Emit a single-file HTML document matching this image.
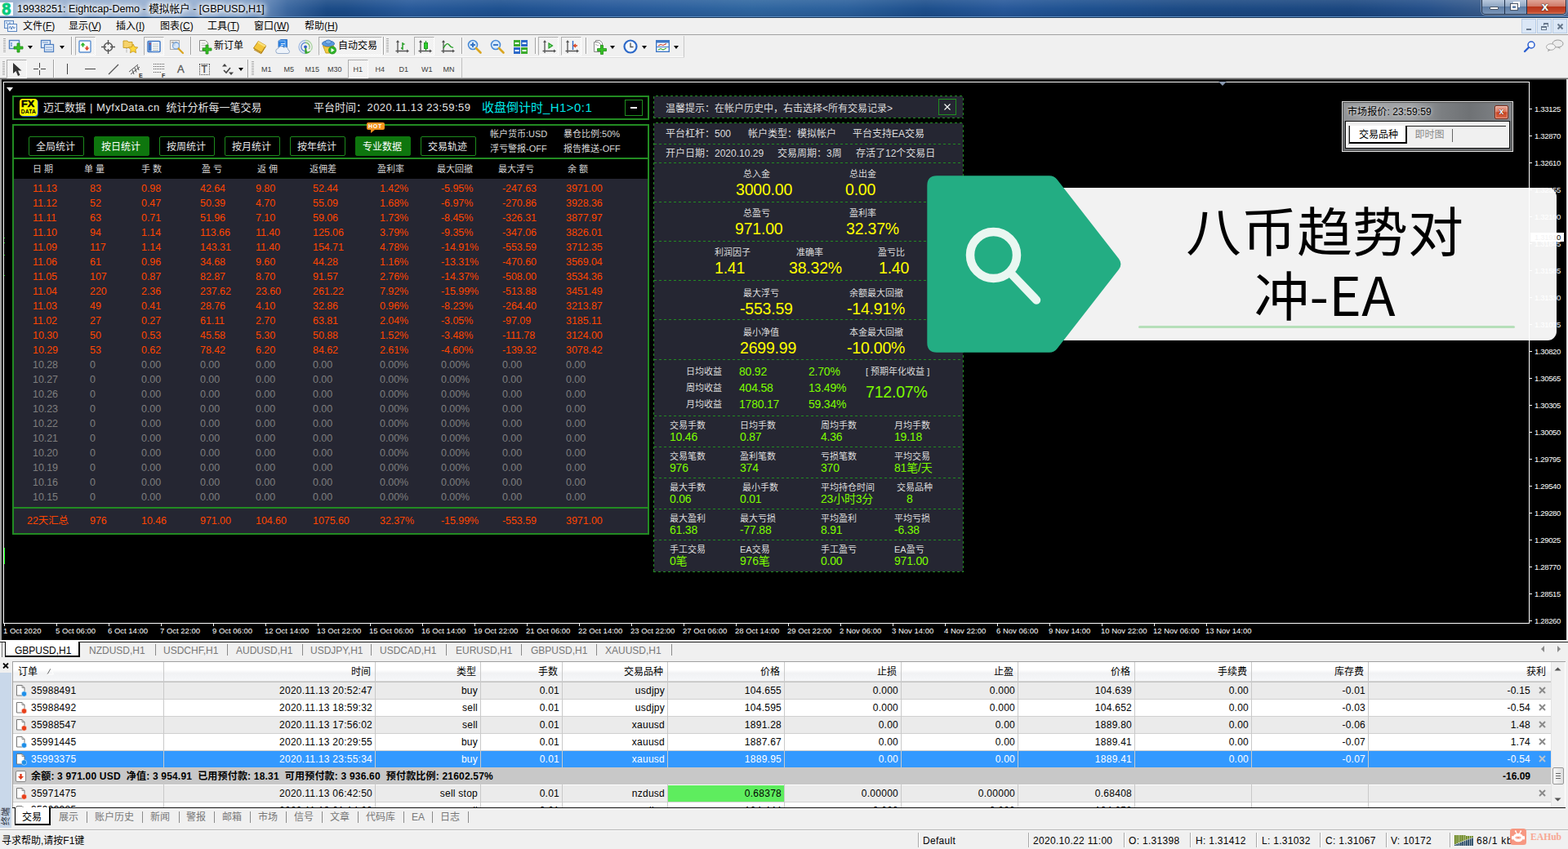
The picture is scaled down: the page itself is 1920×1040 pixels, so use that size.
<!DOCTYPE html>
<html lang="zh-CN">
<head>
<meta charset="utf-8">
<title>19938251: Eightcap-Demo - 模拟帐户 - [GBPUSD,H1]</title>
<style>
*{box-sizing:border-box;margin:0;padding:0}
html,body{width:1920px;height:1040px;overflow:hidden;background:#f0f0f0}
body{position:relative;font-family:"Liberation Sans","Noto Sans CJK SC",sans-serif;font-size:12px;color:#000}
div,span,svg,i,b,u{position:absolute;white-space:nowrap;font-style:normal}
u{position:static}
.s{position:static}

#title{left:0;top:0;width:1920px;height:22px;background:linear-gradient(90deg,#1c4c88 0,#1b4b87 22%,#27599a 26%,#1e5190 32%,#27599a 38%,#2f66a0 48%,#2b609c 54%,#1d4f8c 59%,#27589a 64%,#1e5190 69%,#1c4a84 76%,#1b4780 86%,#25508a 91%,#3a5d8c 95%,#4e6d98 98%,#58759e 100%)}
#tglow{left:0;top:0;width:400px;height:20px;background:linear-gradient(90deg,rgba(166,186,214,.95) 0,rgba(164,186,216,.93) 60%,rgba(156,182,218,.8) 76%,rgba(120,156,205,.35) 88%,rgba(80,130,190,0) 100%)}
#title:after{content:"";position:absolute;left:0;right:0;bottom:0;height:2px;background:linear-gradient(180deg,#5f8fc4 0,#5f8fc4 50%,#15304f 50%,#15304f 100%)}
#title:before{content:"";position:absolute;left:0;right:0;top:0;height:20px;background:linear-gradient(180deg,rgba(255,255,255,.10),rgba(255,255,255,0) 55%,rgba(0,0,20,.10))}
.ttxt{left:21px;top:3px;font-size:12.620px;line-height:16px;color:#000;text-shadow:0 0 7px #fff,0 0 7px #fff,0 0 4px #fff,0 0 10px #fff}
.wb{top:0;height:18px;border:1px solid #1c2c44;border-top:none}
.mn{top:25px;font-size:12px;line-height:14px;color:#000}
.mdib{top:23px;width:18px;height:18px;background:#dbe7f6;border:1px solid #b8cde6}
.grip{width:3px;background:repeating-linear-gradient(180deg,#a8a8a8 0,#a8a8a8 1px,#f8f8f8 1px,#f8f8f8 2px)}
.sep{width:2px;border-left:1px solid #a0a0a0;border-right:1px solid #fff}
.pressed{background:repeating-conic-gradient(#fff 0 25%,#e6e6e6 0 50%) 0 0/2px 2px;border:1px solid #b0b0b0;border-right-color:#fff;border-bottom-color:#fff}
.tf{top:78.500px;font-size:9px;line-height:12px;color:#3c3c3c}
.dd{width:0;height:0;border-left:3.5px solid transparent;border-right:3.5px solid transparent;border-top:4px solid #000}

.pl{left:1879px;font-size:9.500px;line-height:11px;color:#fff;font-family:"Liberation Sans",sans-serif;letter-spacing:-.33px}
.tk{left:1873px;width:3px;height:1px;background:#fff}
.tl{top:767px;font-size:9.500px;line-height:11px;color:#fff;font-family:"Liberation Sans",sans-serif}
.tt{top:763px;width:1px;height:4px;background:#fff}
.ctab{top:790px;font-size:12px;line-height:14px;color:#777}
.csep{top:789px;width:1px;height:14px;background:#8a8a8a}

.lb{border:2px solid #228b22}
.btn{top:167px;width:68px;height:24px;border:1px solid #1d8a1d;border-radius:2px;text-align:center;font-size:12px;line-height:23px;color:#e6e6e6;padding:1px 2px 0 0}
.btn.on{background:#0e760e;border-color:#0e760e;color:#fff}
.hd{top:200px;font-size:11px;line-height:14px;color:#d4d4d4}
.r{font-size:12.500px;line-height:18px;color:#ff4500;font-family:"Liberation Sans","Noto Sans CJK SC",sans-serif;letter-spacing:-.07px}
.r.z{color:#7e7e7e}
.inf{font-size:11px;line-height:14px;color:#d8d8d8}

.rp{background:#252632}
.ds{left:801px;width:378px;height:1px;background:repeating-linear-gradient(90deg,#228b22 0,#228b22 3px,transparent 3px,transparent 6px)}
.rt{font-size:12px;line-height:14px;color:#dcdcdc}
.rl{font-size:11px;line-height:14px;color:#dcdcdc}
.yv{font-size:19.500px;line-height:22px;color:#ffff00;font-family:"Liberation Sans",sans-serif;letter-spacing:-.2px}
.gv{font-size:14px;line-height:16px;color:#7cfc00;font-family:"Liberation Sans","Noto Sans CJK SC",sans-serif;letter-spacing:-.2px}

.bt{left:1372px;width:500px;text-align:center;font-size:68px;line-height:79px;color:#000;font-family:"Noto Sans CJK SC","Liberation Sans",sans-serif;font-weight:400;transform:scaleY(.96);transform-origin:50% 50%}

.th{top:816px;font-size:12px;line-height:14px;color:#000}
.td{font-size:12px;line-height:20px;color:#000;letter-spacing:.25px;font-family:"Liberation Sans","Noto Sans CJK SC",sans-serif}
.vs{top:811px;width:1px;background:#c9c9c9}
.hl{left:16px;width:1883px;height:1px;background:#d0d0d0}
.bt2{top:994px;font-size:12px;line-height:14px;color:#777}
.bsep{top:994px;width:1px;height:14px;background:#8a8a8a}
.sb{top:1023px;font-size:12px;line-height:14px;color:#000;letter-spacing:.3px}
.ssep{top:1020px;width:2px;height:18px;border-left:1px solid #a8a8a8;border-right:1px solid #fff}
</style>
</head>
<body>

<!-- top -->
<div id="title"></div><div id="tglow"></div>
<div style="left:0px;top:3px;width:16px;height:16px;background:#fff;overflow:hidden"><span style="left:2.300px;top:-3.500px;font-size:20px;line-height:22px;font-weight:bold;color:#05c97c;-webkit-text-stroke:.800px #05c97c;font-family:'Liberation Sans',sans-serif">8</span></div>
<span class="ttxt">19938251: Eightcap-Demo - 模拟帐户 - [GBPUSD,H1]</span>
<div style="left:1814px;top:0px;width:104px;height:18px;border:1px solid #20324c;border-top:none;border-radius:0 0 5px 5px;overflow:hidden;box-shadow:0 0 0 1px rgba(255,255,255,.35)"><div style="left:0px;top:0px;width:28px;height:17px;background:linear-gradient(180deg,#b9c9dd 0,#8fa6c3 45%,#5f7ea6 50%,#7c97b9 100%);border-right:1px solid #20324c"></div><div style="left:28px;top:0px;width:27px;height:17px;background:linear-gradient(180deg,#b9c9dd 0,#8fa6c3 45%,#5f7ea6 50%,#7c97b9 100%);border-right:1px solid #20324c"></div><div style="left:55px;top:0px;width:48px;height:17px;background:linear-gradient(180deg,#e0a597 0,#d07a68 45%,#b9351a 50%,#c44a2e 85%,#d8785a 100%)"></div><div style="left:9px;top:8px;width:11px;height:4px;background:#fff;border:1px solid #4a5566;border-radius:1px"></div><div style="left:35px;top:5px;width:8px;height:7px;border:2px solid #fff;outline:1px solid #4a5566"></div><div style="left:38px;top:2px;width:8px;height:7px;border:2px solid #fff;border-left:none;border-bottom:none"></div><span style="left:72.500px;top:-2.500px;font-size:15.500px;line-height:20px;font-weight:bold;color:#fff;text-shadow:0 0 2px #333,0 0 1px #333;font-family:'Liberation Sans',sans-serif">x</span></div>
<div style="left:0px;top:22px;width:1920px;height:20px;background:#f0f0f0"></div>
<div style="left:0px;top:42px;width:1920px;height:1px;background:#a0a0a0"></div>
<svg style="left:4px;top:24px" width="18" height="16" viewBox="0 0 18 16"><rect x="1.5" y="1.5" width="11" height="9" fill="#dce9f8" stroke="#5b86c0"/><rect x="5.5" y="5.5" width="11" height="9" fill="#eef4fc" stroke="#5b86c0"/><path d="M7 11l1.5-3 1.5 4 1.5-4 1.5 3 1.5-2" fill="none" stroke="#5b86c0" stroke-width="1"/><path d="M3 4h2M7 4h2" stroke="#5b86c0"/></svg>
<span class="mn" style="left:28px">文件(<u>F</u>)</span>
<span class="mn" style="left:84px">显示(<u>V</u>)</span>
<span class="mn" style="left:142px">插入(<u>I</u>)</span>
<span class="mn" style="left:196px">图表(<u>C</u>)</span>
<span class="mn" style="left:254px">工具(<u>T</u>)</span>
<span class="mn" style="left:311px">窗口(<u>W</u>)</span>
<span class="mn" style="left:373px">帮助(<u>H</u>)</span>
<div class="mdib" style="left:1863px"><i style="left:5px;top:11px;width:6px;height:2px;background:#68788c"></i></div>
<div class="mdib" style="left:1882px"><i style="left:4px;top:8px;width:7px;height:5px;border:1px solid #68788c;border-top-width:2px"></i><i style="left:7px;top:4px;width:6px;height:5px;border:1px solid #68788c;border-top-width:2px;border-left:none;border-bottom:none"></i><i style="left:7px;top:4px;width:1px;height:3px;background:#68788c"></i></div>
<div class="mdib" style="left:1901px"><svg style="left:4px;top:4px" width="10" height="10" viewBox="0 0 10 10"><path d="M1.5 1.5l6 6M7.5 1.5l-6 6" stroke="#68788c" stroke-width="2"/></svg></div>
<div style="left:0px;top:43px;width:1920px;height:54px;background:#f0f0f0"></div>
<div style="left:0px;top:69px;width:838px;height:1px;background:#fdfdfd"></div>
<div style="left:0px;top:70px;width:838px;height:1px;background:#dcdcdc"></div>
<div style="left:837px;top:44px;width:1px;height:26px;background:#c8c8c8"></div>
<div style="left:565px;top:71px;width:1px;height:25px;background:#c0c0c0"></div>
<div style="left:0px;top:95px;width:1920px;height:1px;background:#b4b4b4"></div>
<div style="left:0px;top:96px;width:1920px;height:1px;background:#6c6c6c"></div>
<i class="grip" style="left:4px;top:47px;height:18px"></i>
<i class="grip" style="left:473px;top:47px;height:18px"></i>
<i class="grip" style="left:3px;top:75px;height:18px"></i>
<i class="grip" style="left:308px;top:75px;height:18px"></i>
<i class="sep" style="left:87px;top:45px;height:22px"></i>
<i class="sep" style="left:233px;top:45px;height:22px"></i>
<i class="sep" style="left:469px;top:45px;height:22px"></i>
<i class="sep" style="left:565px;top:46px;height:20px"></i>
<i class="sep" style="left:655px;top:46px;height:20px"></i>
<i class="sep" style="left:717px;top:46px;height:20px"></i>
<i class="sep" style="left:65px;top:73px;height:22px"></i>
<i class="sep" style="left:303px;top:73px;height:22px"></i>
<i class="pressed" style="left:92px;top:45px;width:25px;height:23px"></i>
<i class="pressed" style="left:176px;top:45px;width:25px;height:23px"></i>
<i class="pressed" style="left:390px;top:45px;width:78px;height:23px"></i>
<i class="pressed" style="left:507px;top:45px;width:25px;height:23px"></i>
<i class="pressed" style="left:659px;top:45px;width:25px;height:23px"></i>
<i class="pressed" style="left:687px;top:45px;width:25px;height:23px"></i>
<i class="pressed" style="left:8px;top:73px;width:25px;height:23px"></i>
<i class="pressed" style="left:426px;top:73px;width:25px;height:23px"></i>
<svg style="left:10px;top:48px" width="20" height="18" viewBox="0 0 20 18"><rect x="1.5" y="1.5" width="12" height="10" fill="#e8f1fb" stroke="#4f7fc0" stroke-width="1.4"/><path d="M4 4v5M3 5h2M3 8h2" stroke="#4f7fc0" stroke-width=".8"/><path d="M7 9h4v-4h3v4h4v3h-4v4h-3v-4h-4z" fill="#35c025" stroke="#1d8a12" stroke-width=".8"/></svg>
<i class="dd" style="left:34px;top:56px"></i>
<svg style="left:49px;top:48px" width="20" height="18" viewBox="0 0 20 18"><rect x="1.5" y="1.5" width="11" height="9" fill="#e8f1fb" stroke="#4f7fc0" stroke-width="1.3"/><rect x="5.5" y="6.5" width="11" height="9" fill="#e8f1fb" stroke="#4f7fc0" stroke-width="1.3"/><path d="M7 10h8M7 13h8M3 4h7" stroke="#4f7fc0" stroke-width=".8"/></svg>
<i class="dd" style="left:73px;top:56px"></i>
<svg style="left:96px;top:49px" width="17" height="17" viewBox="0 0 17 17"><rect x="1" y="1" width="14" height="14" rx="1" fill="#fff" stroke="#5b8fd0" stroke-width="1.4"/><path d="M5.5 3l3 3.5h-2v2h-2v-2h-2z" fill="#2fb52a"/><path d="M10.500 13l-3-3.500h2v-2h2v2h2z" fill="#e0482a"/></svg>
<svg style="left:124px;top:49px" width="17" height="17" viewBox="0 0 17 17"><circle cx="8.500" cy="8.500" r="5" fill="none" stroke="#555" stroke-width="1.4"/><path d="M8.500 0v6M8.500 11v6M0 8.500h6M11 8.500h6" stroke="#555" stroke-width="1.4"/></svg>
<svg style="left:150px;top:47px" width="20" height="20" viewBox="0 0 20 20"><path d="M1 5v-2h5l1 1.500h5v7h-11z" fill="#f6d36b" stroke="#c79a1e" stroke-width=".9"/><path d="M13 7l1.800 3.600 3.900.5-2.900 2.700.8 3.900-3.600-1.900-3.500 1.900.7-3.900-2.800-2.700 3.900-.5z" fill="#ffd83b" stroke="#c79a1e" stroke-width=".9"/><path d="M5 12v5" stroke="#888" stroke-width="1" stroke-dasharray="1 1"/></svg>
<svg style="left:180px;top:49px" width="17" height="17" viewBox="0 0 17 17"><rect x="1" y="1.500" width="15" height="13" rx="1" fill="#fff" stroke="#3f78c6" stroke-width="1.500"/><rect x="2" y="2.500" width="3.500" height="11" fill="#3f78c6"/><path d="M7 5h7M7 7.500h7M7 10h7M7 12.500h7" stroke="#9aa" stroke-width=".8"/><rect x="3" y="4" width="1.500" height="1.500" fill="#f33"/></svg>
<svg style="left:207px;top:48px" width="20" height="20" viewBox="0 0 20 20"><rect x="1.500" y="1.500" width="11" height="11" fill="#eee" stroke="#aaa"/><path d="M3 4h3v4M10 4h-3v4" stroke="#777" fill="none"/><circle cx="8.500" cy="8" r="4" fill="#cfe4fa" fill-opacity=".8" stroke="#7aa7dc" stroke-width="1.300"/><path d="M11.500 11.500l5.500 5.500" stroke="#d9a520" stroke-width="2.200" stroke-linecap="round"/></svg>
<svg style="left:242px;top:48px" width="20" height="20" viewBox="0 0 20 20"><path d="M2.500 1.500h7l3 3v10h-10z" fill="#fff" stroke="#888"/><path d="M4.500 5h5M4.500 7.500h6M4.500 10h6" stroke="#aaa" stroke-width=".9"/><path d="M6 11h4v-4h3v4h4v3h-4v4h-3v-4h-4z" fill="#35c025" stroke="#1d8a12" stroke-width=".8"/></svg>
<span style="left:262px;top:49px;font-size:12px;line-height:14px">新订单</span>
<svg style="left:308px;top:48px" width="20" height="20" viewBox="0 0 20 20"><path d="M2.500 11l5.800-8.500 9.200 5.300-5.500 8.700z" fill="#f3c63a" stroke="#b5820f" stroke-width=".9"/><path d="M8.300 2.500l9.200 5.300-1.200 1.900-9-5.200z" fill="#fbe27a"/><path d="M2.500 11l9.500 5.500M3 12.800l8.800 5 5.700-9" fill="none" stroke="#b5820f" stroke-width="1"/></svg>
<svg style="left:336px;top:47px" width="20" height="20" viewBox="0 0 20 20"><path d="M5 3l3-1.500h7.500v10h-10.500z" fill="#2f86e6" stroke="#1f63b8" stroke-width=".8"/><path d="M5 3h8v9" fill="none" stroke="#9cc8f5" stroke-width=".8"/><path d="M8 6.500h5M8 8.500h3" stroke="#d7e8fb" stroke-width="1.100"/><path d="M5 18.500a3 3 0 01-.5-6 4 4 0 017-1.200 3.300 3.300 0 015.300 2.700 2.300 2.300 0 01-.8 4.500z" fill="#eef3fa" stroke="#8ea6c6" stroke-width=".9"/></svg>
<svg style="left:364px;top:48px" width="20" height="20" viewBox="0 0 20 20"><path d="M10 1.500a8 8 0 000 16" fill="none" stroke="#9db8e2" stroke-width="1.300"/><path d="M10 4.300a5.200 5.200 0 000 10.400" fill="none" stroke="#5f8bd6" stroke-width="1.400"/><path d="M10 1.500a8 8 0 017 12" fill="none" stroke="#a9d3a0" stroke-width="1.300"/><path d="M10 4.300a5.200 5.200 0 014.500 7.800" fill="none" stroke="#7cc06e" stroke-width="1.400"/><path d="M10.300 9.500v8.500a8 8 0 006.700-4.500a9 9 0 01-5 2z" fill="#3fae35"/><path d="M10.300 9.500v8" stroke="#2f9a28" stroke-width="1.800"/><circle cx="10" cy="9.300" r="1.900" fill="#2f62c8"/></svg>
<svg style="left:393px;top:47px" width="22" height="22" viewBox="0 0 22 22"><ellipse cx="9" cy="6.500" rx="7.500" ry="3.500" fill="#5a9be0" stroke="#3a70b8"/><ellipse cx="9" cy="4.500" rx="3.500" ry="2.500" fill="#7fb4ea" stroke="#3a70b8" stroke-width=".8"/><path d="M2.500 9l3.500 9h6l3.500-9a14 14 0 01-13 0z" fill="#f3cc45" stroke="#c49a1a" stroke-width=".9"/><circle cx="14" cy="14.500" r="4.500" fill="#2fb52a" stroke="#1d8a12" stroke-width=".8"/><path d="M12.500 12l4 2.500-4 2.500z" fill="#fff"/></svg>
<span style="left:414px;top:49px;font-size:12px;line-height:14px">自动交易</span>
<svg style="left:483px;top:49px" width="18" height="18" viewBox="0 0 18 18"><path d="M4 1v15M1.500 13.500h15" stroke="#555" stroke-width="1.300" fill="none"/><path d="M4 0l-2 3h4zM18 13.500l-3-2v4z" fill="#555"/><path d="M10 3v9M8 10h2M10 5h2.500" stroke="#1f9a1f" stroke-width="1.400" fill="none"/></svg>
<svg style="left:511px;top:49px" width="18" height="18" viewBox="0 0 18 18"><path d="M4 1v15M1.500 13.500h15" stroke="#555" stroke-width="1.300" fill="none"/><path d="M4 0l-2 3h4zM18 13.500l-3-2v4z" fill="#555"/><path d="M10.500 1v12" stroke="#1f9a1f" stroke-width="1.200"/><rect x="8.500" y="3.500" width="4" height="7" fill="#2fd02f" stroke="#1f9a1f"/></svg>
<svg style="left:539px;top:49px" width="18" height="18" viewBox="0 0 18 18"><path d="M4 1v15M1.500 13.500h15" stroke="#555" stroke-width="1.300" fill="none"/><path d="M4 0l-2 3h4zM18 13.500l-3-2v4z" fill="#555"/><path d="M4 10q4-8 7-4t5 3" stroke="#1f9a1f" stroke-width="1.300" fill="none"/></svg>
<svg style="left:572px;top:48px" width="20" height="20" viewBox="0 0 20 20"><circle cx="7" cy="7" r="5.500" fill="#d9ebfb" stroke="#4a8bd6" stroke-width="1.600"/><path d="M11 11l5.500 5.500" stroke="#d9a520" stroke-width="2.600" stroke-linecap="round"/><path d="M4 7h6" stroke="#2b6cc0" stroke-width="1.800"/><path d="M7 4v6" stroke="#2b6cc0" stroke-width="1.800"/></svg>
<svg style="left:600px;top:48px" width="20" height="20" viewBox="0 0 20 20"><circle cx="7" cy="7" r="5.500" fill="#d9ebfb" stroke="#4a8bd6" stroke-width="1.600"/><path d="M11 11l5.500 5.500" stroke="#d9a520" stroke-width="2.600" stroke-linecap="round"/><path d="M4 7h6" stroke="#2b6cc0" stroke-width="1.800"/></svg>
<svg style="left:629px;top:49px" width="17" height="17" viewBox="0 0 17 17"><rect x="0" y="0" width="8" height="8" fill="#3cab2e"/><rect x="9" y="0" width="8" height="8" fill="#2b68c8"/><rect x="0" y="9" width="8" height="8" fill="#2b68c8"/><rect x="9" y="9" width="8" height="8" fill="#3cab2e"/><path d="M1.500 4h5M10.500 4h5M1.500 13h5M10.500 13h5" stroke="#fff" stroke-width="2"/></svg>
<svg style="left:663px;top:49px" width="18" height="18" viewBox="0 0 18 18"><path d="M4 2v14M1.500 13.500h15" stroke="#555" stroke-width="1.300" fill="none"/><path d="M4 0l-2 3h4zM18 13.500l-3-2v4z" fill="#555"/><path d="M9 4l4.500 3-4.500 3z" fill="#7fe07f" stroke="#1f9a1f" stroke-width="1.200"/></svg>
<svg style="left:691px;top:49px" width="18" height="18" viewBox="0 0 18 18"><path d="M4 2v14M1.500 13.500h15" stroke="#555" stroke-width="1.300" fill="none"/><path d="M4 0l-2 3h4zM18 13.500l-3-2v4z" fill="#555"/><path d="M10.500 1v11" stroke="#2b68c8" stroke-width="1.400"/><path d="M16 7h-4M14 5l-2.500 2 2.500 2" stroke="#d8431f" stroke-width="1.300" fill="none"/></svg>
<svg style="left:725px;top:48px" width="20" height="20" viewBox="0 0 20 20"><path d="M4.500 1.500h5l3 3v9h-8z" fill="#fff" stroke="#888"/><path d="M2.500 3.500h5l3 3v9h-8z" fill="#fff" stroke="#888"/><path d="M4 7c2-2 2 3 4 0" stroke="#888" fill="none" stroke-width=".8"/><path d="M6.5 11.5h4v-4h3v4h4v3h-4v4h-3v-4h-4z" fill="#35c025" stroke="#1d8a12" stroke-width=".8"/></svg>
<i class="dd" style="left:747px;top:56px"></i>
<svg style="left:763px;top:48px" width="18" height="18" viewBox="0 0 18 18"><circle cx="9" cy="9" r="7.500" fill="#f4f8fd" stroke="#2b68c8" stroke-width="2.200"/><path d="M9 4.500v5h3.500" stroke="#555" stroke-width="1.300" fill="none"/></svg>
<i class="dd" style="left:786px;top:56px"></i>
<svg style="left:803px;top:49px" width="18" height="16" viewBox="0 0 18 16"><rect x=".7" y=".7" width="15.600" height="13.600" fill="#fff" stroke="#3f78c6" stroke-width="1.400"/><rect x="1" y="1" width="15" height="2.500" fill="#3f78c6"/><path d="M1 8.500h15" stroke="#3f78c6" stroke-width="1"/><path d="M3 7l3-1.500 3 1 4-2" stroke="#c0392b" stroke-width="1.100" fill="none"/><path d="M3 12l3-1.500 3 1.500 4-2" stroke="#2fa52a" stroke-width="1.100" fill="none"/></svg>
<i class="dd" style="left:825px;top:56px"></i>
<svg style="left:1864px;top:49px" width="18" height="18" viewBox="0 0 18 18"><circle cx="11" cy="6" r="4" fill="#fff" stroke="#2b5fd0" stroke-width="1.500"/><path d="M8 9l-5 5" stroke="#2b5fd0" stroke-width="2.400" stroke-linecap="round"/></svg>
<svg style="left:1892px;top:48px" width="24" height="18" viewBox="0 0 24 18"><ellipse cx="15.500" cy="5.500" rx="6.500" ry="4.500" fill="#ececec" stroke="#9a9a9a"/><path d="M17 9.500l2 3-4-3z" fill="#999"/><ellipse cx="7" cy="9.500" rx="5.500" ry="3.800" fill="#f4f4f4" stroke="#aaa"/><path d="M4 12.500l-1 3 3.500-2.500z" fill="#999"/></svg>
<svg style="left:13px;top:76px" width="16" height="18" viewBox="0 0 16 18"><path d="M3 1v13l3.500-3 2.500 6 2.500-1-2.500-5.500h4.500z" fill="#333"/></svg>
<svg style="left:40px;top:76px" width="18" height="18" viewBox="0 0 18 18"><path d="M8.500 1v6M8.500 10v6M1 8.500h6M10 8.500h6" stroke="#444" stroke-width="1"/></svg>
<div style="left:82px;top:78px;width:1px;height:13px;background:#444"></div>
<div style="left:104px;top:84px;width:13px;height:1px;background:#444"></div>
<svg style="left:131px;top:77px" width="16" height="16" viewBox="0 0 16 16"><path d="M2 14l12-12" stroke="#555" stroke-width="1.200"/></svg>
<svg style="left:157px;top:76px" width="20" height="20" viewBox="0 0 20 20"><path d="M1 12l11-9M3 15l11-9M5 9.500l2 5.500M8 7l2 5.500M11 4.500l2 5.500" stroke="#555" stroke-width="1" fill="none"/><text x="13" y="19" font-size="7" font-weight="bold" fill="#333" font-family="Liberation Sans,sans-serif">E</text></svg>
<svg style="left:187px;top:77px" width="20" height="20" viewBox="0 0 20 20"><path d="M1 1.500h13M1 4.500h13M1 7.500h13M1 11.500h10" stroke="#555" stroke-width="1" stroke-dasharray="1 1"/><text x="11" y="18" font-size="7" font-weight="bold" fill="#333" font-family="Liberation Sans,sans-serif">F</text></svg>
<span style="left:217px;top:77px;font-size:13px;line-height:15px;color:#555;font-weight:normal;-webkit-text-stroke:.3px #555;font-family:'Liberation Sans',sans-serif">A</span>
<div style="left:244px;top:78px;width:13px;height:14px;border:1px dotted #444"></div>
<span style="left:246.500px;top:78px;font-size:12px;line-height:14px;color:#444;font-weight:normal;-webkit-text-stroke:.3px #444;font-family:'Liberation Sans',sans-serif">T</span>
<svg style="left:270px;top:77px" width="18" height="16" viewBox="0 0 18 16"><path d="M5 1l3 3.500h-6z" fill="#444"/><path d="M13 15l-3-3.500h6z" fill="#444"/><path d="M4 9l3 3 5-6" stroke="#444" stroke-width="1.600" fill="none"/></svg>
<i class="dd" style="left:292px;top:83px"></i>
<span class="tf" style="left:320px">M1</span>
<span class="tf" style="left:347.5px">M5</span>
<span class="tf" style="left:373.5px">M15</span>
<span class="tf" style="left:401px">M30</span>
<span class="tf" style="left:432.5px">H1</span>
<span class="tf" style="left:459.5px">H4</span>
<span class="tf" style="left:488.5px">D1</span>
<span class="tf" style="left:516px">W1</span>
<span class="tf" style="left:542.5px">MN</span>
<!-- chart -->
<div style="left:0px;top:97px;width:1920px;height:687px;background:#000"></div>
<div style="left:0px;top:97px;width:1920px;height:1px;background:#3a3a3a"></div>
<div style="left:0px;top:97px;width:2px;height:687px;background:#a0a0a0"></div>
<div style="left:1918px;top:97px;width:2px;height:687px;background:#e8e8e8"></div>
<div style="left:4px;top:100px;width:1869px;height:1px;background:#fff"></div>
<div style="left:4px;top:100px;width:1px;height:664px;background:#fff"></div>
<div style="left:4px;top:763px;width:1869px;height:1px;background:#fff"></div>
<div style="left:1872px;top:100px;width:1px;height:664px;background:#fff"></div>
<div style="left:5px;top:671px;width:1px;height:20px;background:#00ff00"></div>
<div style="left:5px;top:291px;width:1px;height:1px;background:#00d000"></div>
<div style="left:5px;top:297px;width:1px;height:1px;background:#00d000"></div>
<div style="left:5px;top:312px;width:1px;height:1px;background:#00d000"></div>
<div style="left:5px;top:337px;width:1px;height:1px;background:#00d000"></div>
<i style="left:8px;top:107px;width:0;height:0;border-left:4px solid transparent;border-right:4px solid transparent;border-top:5px solid #fff"></i>
<i style="left:1492px;top:100px;width:0;height:0;border-left:5px solid transparent;border-right:5px solid transparent;border-top:5px solid #8a99b0"></i>
<i class="tk" style="top:133px"></i>
<span class="pl" style="top:127.5px">1.33125</span>
<i class="tk" style="top:166px"></i>
<span class="pl" style="top:160.5px">1.32870</span>
<i class="tk" style="top:199px"></i>
<span class="pl" style="top:193.5px">1.32610</span>
<i class="tk" style="top:232px"></i>
<span class="pl" style="top:226.5px">1.32355</span>
<i class="tk" style="top:265px"></i>
<span class="pl" style="top:259.5px">1.32100</span>
<i class="tk" style="top:298px"></i>
<span class="pl" style="top:292.5px">1.31845</span>
<i class="tk" style="top:331px"></i>
<span class="pl" style="top:325.5px">1.31585</span>
<i class="tk" style="top:364px"></i>
<span class="pl" style="top:358.5px">1.31330</span>
<i class="tk" style="top:397px"></i>
<span class="pl" style="top:391.5px">1.31075</span>
<i class="tk" style="top:430px"></i>
<span class="pl" style="top:424.5px">1.30820</span>
<i class="tk" style="top:463px"></i>
<span class="pl" style="top:457.5px">1.30565</span>
<i class="tk" style="top:496px"></i>
<span class="pl" style="top:490.5px">1.30305</span>
<i class="tk" style="top:529px"></i>
<span class="pl" style="top:523.5px">1.30050</span>
<i class="tk" style="top:562px"></i>
<span class="pl" style="top:556.5px">1.29795</span>
<i class="tk" style="top:595px"></i>
<span class="pl" style="top:589.5px">1.29540</span>
<i class="tk" style="top:628px"></i>
<span class="pl" style="top:622.5px">1.29280</span>
<i class="tk" style="top:661px"></i>
<span class="pl" style="top:655.5px">1.29025</span>
<i class="tk" style="top:694px"></i>
<span class="pl" style="top:688.5px">1.28770</span>
<i class="tk" style="top:727px"></i>
<span class="pl" style="top:721.5px">1.28515</span>
<i class="tk" style="top:760px"></i>
<span class="pl" style="top:754.5px">1.28260</span>
<div style="left:1874px;top:285px;width:41px;height:11px;background:#fff"></div>
<span class="pl" style="top:285px;color:#000">1.31910</span>
<i class="tt" style="left:5px"></i>
<span class="tl" style="left:4px">1 Oct 2020</span>
<i class="tt" style="left:69px"></i>
<span class="tl" style="left:68px">5 Oct 06:00</span>
<i class="tt" style="left:133px"></i>
<span class="tl" style="left:132px">6 Oct 14:00</span>
<i class="tt" style="left:197px"></i>
<span class="tl" style="left:196px">7 Oct 22:00</span>
<i class="tt" style="left:261px"></i>
<span class="tl" style="left:260px">9 Oct 06:00</span>
<i class="tt" style="left:325px"></i>
<span class="tl" style="left:324px">12 Oct 14:00</span>
<i class="tt" style="left:389px"></i>
<span class="tl" style="left:388px">13 Oct 22:00</span>
<i class="tt" style="left:453px"></i>
<span class="tl" style="left:452px">15 Oct 06:00</span>
<i class="tt" style="left:517px"></i>
<span class="tl" style="left:516px">16 Oct 14:00</span>
<i class="tt" style="left:581px"></i>
<span class="tl" style="left:580px">19 Oct 22:00</span>
<i class="tt" style="left:645px"></i>
<span class="tl" style="left:644px">21 Oct 06:00</span>
<i class="tt" style="left:709px"></i>
<span class="tl" style="left:708px">22 Oct 14:00</span>
<i class="tt" style="left:773px"></i>
<span class="tl" style="left:772px">23 Oct 22:00</span>
<i class="tt" style="left:837px"></i>
<span class="tl" style="left:836px">27 Oct 06:00</span>
<i class="tt" style="left:901px"></i>
<span class="tl" style="left:900px">28 Oct 14:00</span>
<i class="tt" style="left:965px"></i>
<span class="tl" style="left:964px">29 Oct 22:00</span>
<i class="tt" style="left:1029px"></i>
<span class="tl" style="left:1028px">2 Nov 06:00</span>
<i class="tt" style="left:1093px"></i>
<span class="tl" style="left:1092px">3 Nov 14:00</span>
<i class="tt" style="left:1157px"></i>
<span class="tl" style="left:1156px">4 Nov 22:00</span>
<i class="tt" style="left:1221px"></i>
<span class="tl" style="left:1220px">6 Nov 06:00</span>
<i class="tt" style="left:1285px"></i>
<span class="tl" style="left:1284px">9 Nov 14:00</span>
<i class="tt" style="left:1349px"></i>
<span class="tl" style="left:1348px">10 Nov 22:00</span>
<i class="tt" style="left:1413px"></i>
<span class="tl" style="left:1412px">12 Nov 06:00</span>
<i class="tt" style="left:1477px"></i>
<span class="tl" style="left:1476px">13 Nov 14:00</span>
<div style="left:0px;top:784px;width:1920px;height:2px;background:#fafafa"></div>
<div style="left:0px;top:786px;width:1920px;height:1px;background:#1a1a1a"></div>
<div style="left:0px;top:787px;width:1920px;height:23px;background:#f0f0f0"></div>
<div style="left:2px;top:787px;width:1px;height:18px;background:#777"></div>
<div style="left:6px;top:786px;width:92px;height:19px;background:#fff;border:1px solid #000;border-top:none;border-width:0 2px 2px 1px"></div>
<span class="ctab" style="left:18px;color:#000">GBPUSD,H1</span>
<span class="ctab" style="left:109px">NZDUSD,H1</span>
<span class="ctab" style="left:200px">USDCHF,H1</span>
<span class="ctab" style="left:289px">AUDUSD,H1</span>
<span class="ctab" style="left:380px">USDJPY,H1</span>
<span class="ctab" style="left:465px">USDCAD,H1</span>
<span class="ctab" style="left:558px">EURUSD,H1</span>
<span class="ctab" style="left:650px">GBPUSD,H1</span>
<span class="ctab" style="left:741px">XAUUSD,H1</span>
<i class="csep" style="left:190px"></i>
<i class="csep" style="left:278px"></i>
<i class="csep" style="left:370px"></i>
<i class="csep" style="left:454px"></i>
<i class="csep" style="left:546px"></i>
<i class="csep" style="left:638px"></i>
<i class="csep" style="left:730px"></i>
<i class="csep" style="left:822px"></i>
<i style="left:1887px;top:791px;width:0;height:0;border-top:4px solid transparent;border-bottom:4px solid transparent;border-right:4px solid #8a8a8a"></i>
<i style="left:1907px;top:791px;width:0;height:0;border-top:4px solid transparent;border-bottom:4px solid transparent;border-left:4px solid #8a8a8a"></i>
<div style="left:1643px;top:124px;width:210px;height:62px;background:linear-gradient(180deg,#8b8e91 0,#75787b 35%,#6c6f72 100%);border:1px solid #e4e4e4;box-shadow:inset 0 0 0 1px #4a4a4a"></div>
<div style="left:1645px;top:126px;width:206px;height:22px;background:linear-gradient(90deg,#8f9194 0,#a0a2a5 12%,#a0a2a5 40%,#7c7f82 58%,#6f7275 75%,#83868a 100%)"></div>
<span style="left:1650px;top:130px;font-size:12px;line-height:14px;color:#000;letter-spacing:.1px;text-shadow:0 0 5px #d8d8d8,0 0 3px #ccc">市场报价: 23:59:59</span>
<div style="left:1830px;top:129px;width:17px;height:17px;background:linear-gradient(180deg,#e8a898 0,#dc7a60 45%,#c84422 52%,#d8684a 100%);border:1px solid #7a2a18;border-radius:2px;box-shadow:inset 0 0 0 1px rgba(255,255,255,.35)"><span style="left:4.500px;top:0px;font-size:10.500px;line-height:13px;font-weight:bold;color:#fff;text-shadow:0 0 1px #400,0 0 1px #400;font-family:'Liberation Sans',sans-serif">x</span></div>
<div style="left:1647px;top:148px;width:202px;height:34px;background:#f0f0f0;border:1px solid #0a0a0a;box-shadow:inset 1px 1px 0 #fff,inset -1px -1px 0 #fff"></div>
<div style="left:1722px;top:154px;width:122px;height:1px;background:#222"></div>
<div style="left:1651px;top:154px;width:1px;height:23px;background:#999"></div>
<div style="left:1652px;top:154px;width:71px;height:22px;background:#fff;border:1px solid #000;border-top:none;border-width:0 2px 2px 1px;border-left-color:#222"></div>
<span style="left:1664px;top:158px;font-size:12px;line-height:14px;color:#000">交易品种</span>
<span style="left:1732.500px;top:158px;font-size:12px;line-height:14px;color:#8a8a8a">即时图</span>
<div style="left:1778px;top:158px;width:1px;height:16px;background:#666"></div>
<!-- left -->
<div class="lb" style="left:15px;top:117px;width:780px;height:30px;background:#000"></div>
<div style="left:25px;top:122px;width:22px;height:21px;background:#1a4fd0;border-radius:4px"></div>
<div style="left:24px;top:121px;width:22px;height:21px;background:#ffff00;border-radius:4px;overflow:hidden"><span style="left:2.200px;top:2.200px;font-size:10.300px;line-height:10px;font-weight:bold;color:#000;-webkit-text-stroke:.45px #000;transform:scaleX(1.220);transform-origin:0 0;font-family:'Liberation Sans',sans-serif">FX</span><span style="left:1.700px;top:12.300px;font-size:6.700px;line-height:7px;font-weight:bold;color:#000;letter-spacing:.15px;font-family:'Liberation Sans',sans-serif">DATA</span></div>
<span id="lt1" style="left:53px;top:124px;font-size:13px;line-height:16px;color:#e4e4e4">迈汇数据</span>
<span id="lt2" style="left:110px;top:124px;font-size:13px;line-height:16px;color:#e4e4e4;letter-spacing:.5px">| MyfxData.cn</span>
<span id="lt3" style="left:203.500px;top:124px;font-size:13px;line-height:16px;color:#e4e4e4">统计分析每一笔交易</span>
<span id="lt4" style="left:384px;top:124px;font-size:13px;line-height:16px;color:#e4e4e4">平台时间：</span>
<span id="lt5" style="left:449.500px;top:124px;font-size:13px;line-height:16px;color:#e4e4e4;letter-spacing:.45px">2020.11.13 23:59:59</span>
<span id="lc1" style="left:590px;top:123px;font-size:15px;line-height:18px;color:#00e8e8">收盘倒计时</span>
<span id="lc2" style="left:665px;top:123px;font-size:15px;line-height:18px;color:#00e8e8;letter-spacing:.45px">_H1&gt;0:1</span>
<div style="left:765px;top:122px;width:22px;height:20px;border:1px solid #1f8f1f"><div style="left:6px;top:8px;width:8px;height:2px;background:#fff"></div></div>
<div class="lb" style="left:15px;top:152px;width:780px;height:503px;background:#252632"></div>
<div style="left:17px;top:154px;width:776px;height:65px;background:#000"></div>
<div style="left:17px;top:193px;width:776px;height:2px;background:#228b22"></div>
<div style="left:17px;top:621px;width:776px;height:2px;background:#228b22"></div>
<div class="btn" style="left:35px">全局统计</div>
<div class="btn on" style="left:115px">按日统计</div>
<div class="btn" style="left:195px">按周统计</div>
<div class="btn" style="left:275px">按月统计</div>
<div class="btn" style="left:355px">按年统计</div>
<div class="btn on" style="left:435px">专业数据</div>
<div class="btn" style="left:515px">交易轨迹</div>
<div style="left:449px;top:150px;width:22px;height:9px;background:#f7931e;border-radius:2px"><span style="left:2px;top:0;font-size:7px;line-height:9px;font-weight:bold;color:#fff;letter-spacing:.7px;font-family:'Liberation Sans',sans-serif">HOT</span></div>
<i style="left:454px;top:159px;width:0;height:0;border-left:0 solid transparent;border-right:5px solid transparent;border-top:4px solid #f7931e"></i>
<span class="inf" style="left:600px;top:157px">帐户货币:USD</span>
<span class="inf" style="left:600px;top:175px">浮亏警报-OFF</span>
<span class="inf" style="left:690px;top:157px">暴仓比例:50%</span>
<span class="inf" style="left:690px;top:175px">报告推送-OFF</span>
<span class="hd" style="left:40px">日 期</span>
<span class="hd" style="left:103px">单 量</span>
<span class="hd" style="left:173px">手 数</span>
<span class="hd" style="left:247px">盈 亏</span>
<span class="hd" style="left:315px">返 佣</span>
<span class="hd" style="left:379px">返佣差</span>
<span class="hd" style="left:462px">盈利率</span>
<span class="hd" style="left:535px">最大回撤</span>
<span class="hd" style="left:610px">最大浮亏</span>
<span class="hd" style="left:695px">余 额</span>
<span class="r" style="left:40px;top:222px">11.13</span>
<span class="r" style="left:110px;top:222px">83</span>
<span class="r" style="left:173px;top:222px">0.98</span>
<span class="r" style="left:245px;top:222px">42.64</span>
<span class="r" style="left:313px;top:222px">9.80</span>
<span class="r" style="left:383px;top:222px">52.44</span>
<span class="r" style="left:465px;top:222px">1.42%</span>
<span class="r" style="left:540px;top:222px">-5.95%</span>
<span class="r" style="left:615px;top:222px">-247.63</span>
<span class="r" style="left:693px;top:222px">3971.00</span>
<span class="r" style="left:40px;top:240px">11.12</span>
<span class="r" style="left:110px;top:240px">52</span>
<span class="r" style="left:173px;top:240px">0.47</span>
<span class="r" style="left:245px;top:240px">50.39</span>
<span class="r" style="left:313px;top:240px">4.70</span>
<span class="r" style="left:383px;top:240px">55.09</span>
<span class="r" style="left:465px;top:240px">1.68%</span>
<span class="r" style="left:540px;top:240px">-6.97%</span>
<span class="r" style="left:615px;top:240px">-270.86</span>
<span class="r" style="left:693px;top:240px">3928.36</span>
<span class="r" style="left:40px;top:258px">11.11</span>
<span class="r" style="left:110px;top:258px">63</span>
<span class="r" style="left:173px;top:258px">0.71</span>
<span class="r" style="left:245px;top:258px">51.96</span>
<span class="r" style="left:313px;top:258px">7.10</span>
<span class="r" style="left:383px;top:258px">59.06</span>
<span class="r" style="left:465px;top:258px">1.73%</span>
<span class="r" style="left:540px;top:258px">-8.45%</span>
<span class="r" style="left:615px;top:258px">-326.31</span>
<span class="r" style="left:693px;top:258px">3877.97</span>
<span class="r" style="left:40px;top:276px">11.10</span>
<span class="r" style="left:110px;top:276px">94</span>
<span class="r" style="left:173px;top:276px">1.14</span>
<span class="r" style="left:245px;top:276px">113.66</span>
<span class="r" style="left:313px;top:276px">11.40</span>
<span class="r" style="left:383px;top:276px">125.06</span>
<span class="r" style="left:465px;top:276px">3.79%</span>
<span class="r" style="left:540px;top:276px">-9.35%</span>
<span class="r" style="left:615px;top:276px">-347.06</span>
<span class="r" style="left:693px;top:276px">3826.01</span>
<span class="r" style="left:40px;top:294px">11.09</span>
<span class="r" style="left:110px;top:294px">117</span>
<span class="r" style="left:173px;top:294px">1.14</span>
<span class="r" style="left:245px;top:294px">143.31</span>
<span class="r" style="left:313px;top:294px">11.40</span>
<span class="r" style="left:383px;top:294px">154.71</span>
<span class="r" style="left:465px;top:294px">4.78%</span>
<span class="r" style="left:540px;top:294px">-14.91%</span>
<span class="r" style="left:615px;top:294px">-553.59</span>
<span class="r" style="left:693px;top:294px">3712.35</span>
<span class="r" style="left:40px;top:312px">11.06</span>
<span class="r" style="left:110px;top:312px">61</span>
<span class="r" style="left:173px;top:312px">0.96</span>
<span class="r" style="left:245px;top:312px">34.68</span>
<span class="r" style="left:313px;top:312px">9.60</span>
<span class="r" style="left:383px;top:312px">44.28</span>
<span class="r" style="left:465px;top:312px">1.16%</span>
<span class="r" style="left:540px;top:312px">-13.31%</span>
<span class="r" style="left:615px;top:312px">-470.60</span>
<span class="r" style="left:693px;top:312px">3569.04</span>
<span class="r" style="left:40px;top:330px">11.05</span>
<span class="r" style="left:110px;top:330px">107</span>
<span class="r" style="left:173px;top:330px">0.87</span>
<span class="r" style="left:245px;top:330px">82.87</span>
<span class="r" style="left:313px;top:330px">8.70</span>
<span class="r" style="left:383px;top:330px">91.57</span>
<span class="r" style="left:465px;top:330px">2.76%</span>
<span class="r" style="left:540px;top:330px">-14.37%</span>
<span class="r" style="left:615px;top:330px">-508.00</span>
<span class="r" style="left:693px;top:330px">3534.36</span>
<span class="r" style="left:40px;top:348px">11.04</span>
<span class="r" style="left:110px;top:348px">220</span>
<span class="r" style="left:173px;top:348px">2.36</span>
<span class="r" style="left:245px;top:348px">237.62</span>
<span class="r" style="left:313px;top:348px">23.60</span>
<span class="r" style="left:383px;top:348px">261.22</span>
<span class="r" style="left:465px;top:348px">7.92%</span>
<span class="r" style="left:540px;top:348px">-15.99%</span>
<span class="r" style="left:615px;top:348px">-513.88</span>
<span class="r" style="left:693px;top:348px">3451.49</span>
<span class="r" style="left:40px;top:366px">11.03</span>
<span class="r" style="left:110px;top:366px">49</span>
<span class="r" style="left:173px;top:366px">0.41</span>
<span class="r" style="left:245px;top:366px">28.76</span>
<span class="r" style="left:313px;top:366px">4.10</span>
<span class="r" style="left:383px;top:366px">32.86</span>
<span class="r" style="left:465px;top:366px">0.96%</span>
<span class="r" style="left:540px;top:366px">-8.23%</span>
<span class="r" style="left:615px;top:366px">-264.40</span>
<span class="r" style="left:693px;top:366px">3213.87</span>
<span class="r" style="left:40px;top:384px">11.02</span>
<span class="r" style="left:110px;top:384px">27</span>
<span class="r" style="left:173px;top:384px">0.27</span>
<span class="r" style="left:245px;top:384px">61.11</span>
<span class="r" style="left:313px;top:384px">2.70</span>
<span class="r" style="left:383px;top:384px">63.81</span>
<span class="r" style="left:465px;top:384px">2.04%</span>
<span class="r" style="left:540px;top:384px">-3.05%</span>
<span class="r" style="left:615px;top:384px">-97.09</span>
<span class="r" style="left:693px;top:384px">3185.11</span>
<span class="r" style="left:40px;top:402px">10.30</span>
<span class="r" style="left:110px;top:402px">50</span>
<span class="r" style="left:173px;top:402px">0.53</span>
<span class="r" style="left:245px;top:402px">45.58</span>
<span class="r" style="left:313px;top:402px">5.30</span>
<span class="r" style="left:383px;top:402px">50.88</span>
<span class="r" style="left:465px;top:402px">1.52%</span>
<span class="r" style="left:540px;top:402px">-3.48%</span>
<span class="r" style="left:615px;top:402px">-111.78</span>
<span class="r" style="left:693px;top:402px">3124.00</span>
<span class="r" style="left:40px;top:420px">10.29</span>
<span class="r" style="left:110px;top:420px">53</span>
<span class="r" style="left:173px;top:420px">0.62</span>
<span class="r" style="left:245px;top:420px">78.42</span>
<span class="r" style="left:313px;top:420px">6.20</span>
<span class="r" style="left:383px;top:420px">84.62</span>
<span class="r" style="left:465px;top:420px">2.61%</span>
<span class="r" style="left:540px;top:420px">-4.60%</span>
<span class="r" style="left:615px;top:420px">-139.32</span>
<span class="r" style="left:693px;top:420px">3078.42</span>
<span class="r z" style="left:40px;top:438px">10.28</span>
<span class="r z" style="left:110px;top:438px">0</span>
<span class="r z" style="left:173px;top:438px">0.00</span>
<span class="r z" style="left:245px;top:438px">0.00</span>
<span class="r z" style="left:313px;top:438px">0.00</span>
<span class="r z" style="left:383px;top:438px">0.00</span>
<span class="r z" style="left:465px;top:438px">0.00%</span>
<span class="r z" style="left:540px;top:438px">0.00%</span>
<span class="r z" style="left:615px;top:438px">0.00</span>
<span class="r z" style="left:693px;top:438px">0.00</span>
<span class="r z" style="left:40px;top:456px">10.27</span>
<span class="r z" style="left:110px;top:456px">0</span>
<span class="r z" style="left:173px;top:456px">0.00</span>
<span class="r z" style="left:245px;top:456px">0.00</span>
<span class="r z" style="left:313px;top:456px">0.00</span>
<span class="r z" style="left:383px;top:456px">0.00</span>
<span class="r z" style="left:465px;top:456px">0.00%</span>
<span class="r z" style="left:540px;top:456px">0.00%</span>
<span class="r z" style="left:615px;top:456px">0.00</span>
<span class="r z" style="left:693px;top:456px">0.00</span>
<span class="r z" style="left:40px;top:474px">10.26</span>
<span class="r z" style="left:110px;top:474px">0</span>
<span class="r z" style="left:173px;top:474px">0.00</span>
<span class="r z" style="left:245px;top:474px">0.00</span>
<span class="r z" style="left:313px;top:474px">0.00</span>
<span class="r z" style="left:383px;top:474px">0.00</span>
<span class="r z" style="left:465px;top:474px">0.00%</span>
<span class="r z" style="left:540px;top:474px">0.00%</span>
<span class="r z" style="left:615px;top:474px">0.00</span>
<span class="r z" style="left:693px;top:474px">0.00</span>
<span class="r z" style="left:40px;top:492px">10.23</span>
<span class="r z" style="left:110px;top:492px">0</span>
<span class="r z" style="left:173px;top:492px">0.00</span>
<span class="r z" style="left:245px;top:492px">0.00</span>
<span class="r z" style="left:313px;top:492px">0.00</span>
<span class="r z" style="left:383px;top:492px">0.00</span>
<span class="r z" style="left:465px;top:492px">0.00%</span>
<span class="r z" style="left:540px;top:492px">0.00%</span>
<span class="r z" style="left:615px;top:492px">0.00</span>
<span class="r z" style="left:693px;top:492px">0.00</span>
<span class="r z" style="left:40px;top:510px">10.22</span>
<span class="r z" style="left:110px;top:510px">0</span>
<span class="r z" style="left:173px;top:510px">0.00</span>
<span class="r z" style="left:245px;top:510px">0.00</span>
<span class="r z" style="left:313px;top:510px">0.00</span>
<span class="r z" style="left:383px;top:510px">0.00</span>
<span class="r z" style="left:465px;top:510px">0.00%</span>
<span class="r z" style="left:540px;top:510px">0.00%</span>
<span class="r z" style="left:615px;top:510px">0.00</span>
<span class="r z" style="left:693px;top:510px">0.00</span>
<span class="r z" style="left:40px;top:528px">10.21</span>
<span class="r z" style="left:110px;top:528px">0</span>
<span class="r z" style="left:173px;top:528px">0.00</span>
<span class="r z" style="left:245px;top:528px">0.00</span>
<span class="r z" style="left:313px;top:528px">0.00</span>
<span class="r z" style="left:383px;top:528px">0.00</span>
<span class="r z" style="left:465px;top:528px">0.00%</span>
<span class="r z" style="left:540px;top:528px">0.00%</span>
<span class="r z" style="left:615px;top:528px">0.00</span>
<span class="r z" style="left:693px;top:528px">0.00</span>
<span class="r z" style="left:40px;top:546px">10.20</span>
<span class="r z" style="left:110px;top:546px">0</span>
<span class="r z" style="left:173px;top:546px">0.00</span>
<span class="r z" style="left:245px;top:546px">0.00</span>
<span class="r z" style="left:313px;top:546px">0.00</span>
<span class="r z" style="left:383px;top:546px">0.00</span>
<span class="r z" style="left:465px;top:546px">0.00%</span>
<span class="r z" style="left:540px;top:546px">0.00%</span>
<span class="r z" style="left:615px;top:546px">0.00</span>
<span class="r z" style="left:693px;top:546px">0.00</span>
<span class="r z" style="left:40px;top:564px">10.19</span>
<span class="r z" style="left:110px;top:564px">0</span>
<span class="r z" style="left:173px;top:564px">0.00</span>
<span class="r z" style="left:245px;top:564px">0.00</span>
<span class="r z" style="left:313px;top:564px">0.00</span>
<span class="r z" style="left:383px;top:564px">0.00</span>
<span class="r z" style="left:465px;top:564px">0.00%</span>
<span class="r z" style="left:540px;top:564px">0.00%</span>
<span class="r z" style="left:615px;top:564px">0.00</span>
<span class="r z" style="left:693px;top:564px">0.00</span>
<span class="r z" style="left:40px;top:582px">10.16</span>
<span class="r z" style="left:110px;top:582px">0</span>
<span class="r z" style="left:173px;top:582px">0.00</span>
<span class="r z" style="left:245px;top:582px">0.00</span>
<span class="r z" style="left:313px;top:582px">0.00</span>
<span class="r z" style="left:383px;top:582px">0.00</span>
<span class="r z" style="left:465px;top:582px">0.00%</span>
<span class="r z" style="left:540px;top:582px">0.00%</span>
<span class="r z" style="left:615px;top:582px">0.00</span>
<span class="r z" style="left:693px;top:582px">0.00</span>
<span class="r z" style="left:40px;top:600px">10.15</span>
<span class="r z" style="left:110px;top:600px">0</span>
<span class="r z" style="left:173px;top:600px">0.00</span>
<span class="r z" style="left:245px;top:600px">0.00</span>
<span class="r z" style="left:313px;top:600px">0.00</span>
<span class="r z" style="left:383px;top:600px">0.00</span>
<span class="r z" style="left:465px;top:600px">0.00%</span>
<span class="r z" style="left:540px;top:600px">0.00%</span>
<span class="r z" style="left:615px;top:600px">0.00</span>
<span class="r z" style="left:693px;top:600px">0.00</span>
<span class="r" style="left:33px;top:629px">22天汇总</span>
<span class="r" style="left:110px;top:629px">976</span>
<span class="r" style="left:173px;top:629px">10.46</span>
<span class="r" style="left:245px;top:629px">971.00</span>
<span class="r" style="left:313px;top:629px">104.60</span>
<span class="r" style="left:383px;top:629px">1075.60</span>
<span class="r" style="left:465px;top:629px">32.37%</span>
<span class="r" style="left:540px;top:629px">-15.99%</span>
<span class="r" style="left:615px;top:629px">-553.59</span>
<span class="r" style="left:693px;top:629px">3971.00</span>
<!-- right -->
<div class="rp" style="left:801px;top:118px;width:378px;height:26px;"></div>
<div style="left:800px;top:117px;width:380px;height:1px;background:repeating-linear-gradient(90deg,transparent 0,transparent 3px,#228b22 3px,#228b22 6px)"></div><div style="left:800px;top:144px;width:380px;height:1px;background:repeating-linear-gradient(90deg,#228b22 0,#228b22 3px,transparent 3px,transparent 6px)"></div><div style="left:800px;top:117px;width:1px;height:28px;background:repeating-linear-gradient(180deg,transparent 0,transparent 1px,#228b22 1px,#228b22 4px,transparent 4px,transparent 6px)"></div><div style="left:1179px;top:117px;width:1px;height:28px;background:repeating-linear-gradient(180deg,transparent 0,transparent 3px,#228b22 3px,#228b22 6px)"></div>
<span class="rt" style="left:815px;top:126px">温馨提示：在帐户历史中，右击选择&lt;所有交易记录&gt;</span>
<div style="left:1149px;top:121px;width:22px;height:20px;border:1px solid #1f8f1f"><svg style="left:6px;top:5px" width="8" height="8" viewBox="0 0 8 8"><path d="M.500 .500l7 7M7.500 .500l-7 7" stroke="#fff" stroke-width="1.100"/></svg></div>
<div class="rp" style="left:801px;top:151px;width:378px;height:549px;"></div>
<div style="left:800px;top:150px;width:380px;height:1px;background:repeating-linear-gradient(90deg,transparent 0,transparent 3px,#228b22 3px,#228b22 6px)"></div><div style="left:800px;top:700px;width:380px;height:1px;background:repeating-linear-gradient(90deg,#228b22 0,#228b22 3px,transparent 3px,transparent 6px)"></div><div style="left:800px;top:150px;width:1px;height:551px;background:repeating-linear-gradient(180deg,transparent 0,transparent 1px,#228b22 1px,#228b22 4px,transparent 4px,transparent 6px)"></div><div style="left:1179px;top:150px;width:1px;height:551px;background:repeating-linear-gradient(180deg,transparent 0,transparent 3px,#228b22 3px,#228b22 6px)"></div>
<i class="ds" style="top:176px"></i>
<i class="ds" style="top:199px"></i>
<i class="ds" style="top:247px"></i>
<i class="ds" style="top:295px"></i>
<i class="ds" style="top:343px"></i>
<i class="ds" style="top:391px"></i>
<i class="ds" style="top:440px"></i>
<i class="ds" style="top:509px"></i>
<i class="ds" style="top:547px"></i>
<i class="ds" style="top:585px"></i>
<i class="ds" style="top:623px"></i>
<i class="ds" style="top:661px"></i>
<span class="rt" style="left:815px;top:157px">平台杠杆：500</span>
<span class="rt" style="left:916px;top:157px">帐户类型：模拟帐户</span>
<span class="rt" style="left:1044px;top:157px">平台支持EA交易</span>
<span class="rt" style="left:815px;top:181px">开户日期：2020.10.29</span>
<span class="rt" style="left:952px;top:181px">交易周期：3周</span>
<span class="rt" style="left:1048px;top:181px">存活了12个交易日</span>
<span class="rl" style="left:910px;top:206px">总入金</span>
<span class="yv" style="left:901px;top:221px">3000.00</span>
<span class="rl" style="left:1040px;top:206px">总出金</span>
<span class="yv" style="left:1035px;top:221px">0.00</span>
<span class="rl" style="left:910px;top:254px">总盈亏</span>
<span class="yv" style="left:900px;top:269px">971.00</span>
<span class="rl" style="left:1040px;top:254px">盈利率</span>
<span class="yv" style="left:1036px;top:269px">32.37%</span>
<span class="rl" style="left:875px;top:302px">利润因子</span>
<span class="yv" style="left:875px;top:317px">1.41</span>
<span class="rl" style="left:975px;top:302px">准确率</span>
<span class="yv" style="left:966px;top:317px">38.32%</span>
<span class="rl" style="left:1075px;top:302px">盈亏比</span>
<span class="yv" style="left:1076px;top:317px">1.40</span>
<span class="rl" style="left:910px;top:352px">最大浮亏</span>
<span class="yv" style="left:906px;top:367px">-553.59</span>
<span class="rl" style="left:1040px;top:352px">余额最大回撤</span>
<span class="yv" style="left:1037px;top:367px">-14.91%</span>
<span class="rl" style="left:910px;top:400px">最小净值</span>
<span class="yv" style="left:906px;top:415px">2699.99</span>
<span class="rl" style="left:1040px;top:400px">本金最大回撤</span>
<span class="yv" style="left:1037px;top:415px">-10.00%</span>
<span class="rl" style="left:840px;top:448px">日均收益</span>
<span class="gv" style="left:905px;top:447px">80.92</span>
<span class="gv" style="left:990px;top:447px">2.70%</span>
<span class="rl" style="left:840px;top:468px">周均收益</span>
<span class="gv" style="left:905px;top:467px">404.58</span>
<span class="gv" style="left:990px;top:467px">13.49%</span>
<span class="rl" style="left:840px;top:488px">月均收益</span>
<span class="gv" style="left:905px;top:487px">1780.17</span>
<span class="gv" style="left:990px;top:487px">59.34%</span>
<span class="rl" style="left:1060px;top:448px">[ 预期年化收益 ]</span>
<span class="yv" style="left:1060px;top:469px;color:#7cfc00">712.07%</span>
<span class="rl" style="left:820px;top:514px">交易手数</span>
<span class="gv" style="left:820px;top:527px">10.46</span>
<span class="rl" style="left:906px;top:514px">日均手数</span>
<span class="gv" style="left:906px;top:527px">0.87</span>
<span class="rl" style="left:1005px;top:514px">周均手数</span>
<span class="gv" style="left:1005px;top:527px">4.36</span>
<span class="rl" style="left:1095px;top:514px">月均手数</span>
<span class="gv" style="left:1095px;top:527px">19.18</span>
<span class="rl" style="left:820px;top:552px">交易笔数</span>
<span class="gv" style="left:820px;top:565px">976</span>
<span class="rl" style="left:906px;top:552px">盈利笔数</span>
<span class="gv" style="left:906px;top:565px">374</span>
<span class="rl" style="left:1005px;top:552px">亏损笔数</span>
<span class="gv" style="left:1005px;top:565px">370</span>
<span class="rl" style="left:1095px;top:552px">平均交易</span>
<span class="gv" style="left:1095px;top:565px">81笔/天</span>
<span class="rl" style="left:820px;top:590px">最大手数</span>
<span class="gv" style="left:820px;top:603px">0.06</span>
<span class="rl" style="left:909px;top:590px">最小手数</span>
<span class="gv" style="left:906px;top:603px">0.01</span>
<span class="rl" style="left:1005px;top:590px">平均持仓时间</span>
<span class="gv" style="left:1005px;top:603px">23小时3分</span>
<span class="rl" style="left:1098px;top:590px">交易品种</span>
<span class="gv" style="left:1110px;top:603px">8</span>
<span class="rl" style="left:820px;top:628px">最大盈利</span>
<span class="gv" style="left:820px;top:641px">61.38</span>
<span class="rl" style="left:906px;top:628px">最大亏损</span>
<span class="gv" style="left:906px;top:641px">-77.88</span>
<span class="rl" style="left:1005px;top:628px">平均盈利</span>
<span class="gv" style="left:1005px;top:641px">8.91</span>
<span class="rl" style="left:1095px;top:628px">平均亏损</span>
<span class="gv" style="left:1095px;top:641px">-6.38</span>
<span class="rl" style="left:820px;top:666px">手工交易</span>
<span class="gv" style="left:820px;top:679px">0笔</span>
<span class="rl" style="left:906px;top:666px">EA交易</span>
<span class="gv" style="left:906px;top:679px">976笔</span>
<span class="rl" style="left:1005px;top:666px">手工盈亏</span>
<span class="gv" style="left:1005px;top:679px">0.00</span>
<span class="rl" style="left:1095px;top:666px">EA盈亏</span>
<span class="gv" style="left:1095px;top:679px">971.00</span>
<!-- banner -->
<div style="left:1290px;top:230px;width:616px;height:187px;background:rgba(255,255,255,.95);border-radius:0 11px 11px 0"></div>
<svg style="left:1130px;top:210px" width="250" height="230" viewBox="1130 210 250 230"><path d="M1147 215.300 H1285 Q1291 215.300 1294.500 220 L1370 317 Q1374.800 323.500 1370 330 L1294.500 427 Q1291 431.700 1285 431.700 H1147 Q1135.300 431.700 1135.300 419.700 V227.300 Q1135.300 215.300 1147 215.300Z" fill="#23ad83"/><circle cx="1216.500" cy="312.500" r="28.500" fill="none" stroke="#e9f7f1" stroke-width="10.500"/><path d="M1238 335 L1269 367.500" stroke="#e9f7f1" stroke-width="10.500" stroke-linecap="round"/></svg>
<div class="bt" style="top:240px">八币趋势对</div>
<div class="bt" style="top:319px">冲-EA</div>
<div style="left:1394px;top:399px;width:461px;height:3px;background:#b6dfb9;border-radius:1.500px"></div>
<!-- bottom -->
<div style="left:0px;top:806px;width:1920px;height:212px;background:#f0f0f0"></div>
<div style="left:0px;top:824px;width:14px;height:190px;background:#c9d8ea"></div>
<div style="left:14px;top:811px;width:1px;height:203px;background:#f0f0f0"></div>
<svg style="left:3px;top:812px" width="8" height="7" viewBox="0 0 8 7"><path d="M1 .500l6 6M7 .500l-6 6" stroke="#000" stroke-width="1.800"/></svg>
<div style="left:15px;top:810px;width:1902px;height:180px;background:#fff;border-top:1px solid #a0a0a0;border-left:1px solid #a0a0a0"></div>
<div style="left:16px;top:811px;width:1883px;height:24px;background:linear-gradient(180deg,#fff 0,#fff 40%,#f1f2f4 60%,#f6f7f9 100%);border-bottom:1px solid #d5d5d5"></div>
<div style="left:16px;top:835px;width:1883px;height:1px;background:#c2c2c2"></div>
<div style="left:16px;top:836px;width:1883px;height:20px;background:#ebebeb"></div>
<div style="left:16px;top:857px;width:1883px;height:20px;background:#fff"></div>
<div style="left:16px;top:878px;width:1883px;height:20px;background:#ebebeb"></div>
<div style="left:16px;top:899px;width:1883px;height:20px;background:#fff"></div>
<div style="left:16px;top:919px;width:1883px;height:21px;background:#3399ff"></div>
<div style="left:16px;top:940px;width:1883px;height:21px;background:#c8c8c8"></div>
<div style="left:16px;top:962px;width:1883px;height:20px;background:#ebebeb"></div>
<div style="left:16px;top:983px;width:1883px;height:5px;background:#fff"></div>
<i class="hl" style="top:856px"></i>
<i class="hl" style="top:877px"></i>
<i class="hl" style="top:898px"></i>
<i class="hl" style="top:919px"></i>
<i class="hl" style="top:982px"></i>
<i class="vs" style="left:200px;height:129px"></i>
<i class="vs" style="left:200px;top:961px;height:28px"></i>
<i class="vs" style="left:459px;height:129px"></i>
<i class="vs" style="left:459px;top:961px;height:28px"></i>
<i class="vs" style="left:588px;height:129px"></i>
<i class="vs" style="left:588px;top:961px;height:28px"></i>
<i class="vs" style="left:688px;height:129px"></i>
<i class="vs" style="left:688px;top:961px;height:28px"></i>
<i class="vs" style="left:817px;height:129px"></i>
<i class="vs" style="left:817px;top:961px;height:28px"></i>
<i class="vs" style="left:960px;height:129px"></i>
<i class="vs" style="left:960px;top:961px;height:28px"></i>
<i class="vs" style="left:1103px;height:129px"></i>
<i class="vs" style="left:1103px;top:961px;height:28px"></i>
<i class="vs" style="left:1246px;height:129px"></i>
<i class="vs" style="left:1246px;top:961px;height:28px"></i>
<i class="vs" style="left:1389px;height:129px"></i>
<i class="vs" style="left:1389px;top:961px;height:28px"></i>
<i class="vs" style="left:1532px;height:129px"></i>
<i class="vs" style="left:1532px;top:961px;height:28px"></i>
<i class="vs" style="left:1675px;height:129px"></i>
<i class="vs" style="left:1675px;top:961px;height:28px"></i>
<span class="th" style="left:22px">订单</span>
<svg style="left:57px;top:818px" width="9" height="9" viewBox="0 0 9 9"><path d="M1 8l4-7" stroke="#666" stroke-width="1"/><path d="M5 1l3.500 7h-7.500" stroke="#fff" stroke-width="1" fill="none"/></svg>
<span class="th" style="right:1466px">时间</span>
<span class="th" style="right:1337px">类型</span>
<span class="th" style="right:1237px">手数</span>
<span class="th" style="right:1108px">交易品种</span>
<span class="th" style="right:965px">价格</span>
<span class="th" style="right:822px">止损</span>
<span class="th" style="right:679px">止盈</span>
<span class="th" style="right:536px">价格</span>
<span class="th" style="right:393px">手续费</span>
<span class="th" style="right:250px">库存费</span>
<span class="th" style="right:27px">获利</span>
<svg style="left:19px;top:838px" width="15" height="16" viewBox="0 0 15 16"><path d="M1.500 1.500h6.500l3 3v9.500h-9.500z" fill="#fff" stroke="#777" stroke-width="1"/><path d="M8 1.500v3h3" fill="none" stroke="#777" stroke-width=".8"/><circle cx="10.500" cy="12" r="3.200" fill="#1e8fe8" stroke="#fff" stroke-width=".5"/></svg>
<span class="td" style="left:38px;top:836px;color:#000">35988491</span>
<span class="td" style="right:1464px;top:836px;color:#000">2020.11.13 20:52:47</span>
<span class="td" style="right:1335px;top:836px;color:#000">buy</span>
<span class="td" style="right:1235px;top:836px;color:#000">0.01</span>
<span class="td" style="right:1106px;top:836px;color:#000">usdjpy</span>
<span class="td" style="right:963px;top:836px;color:#000">104.655</span>
<span class="td" style="right:820px;top:836px;color:#000">0.000</span>
<span class="td" style="right:677px;top:836px;color:#000">0.000</span>
<span class="td" style="right:534px;top:836px;color:#000">104.639</span>
<span class="td" style="right:391px;top:836px;color:#000">0.00</span>
<span class="td" style="right:248px;top:836px;color:#000">-0.01</span>
<span class="td" style="right:46px;top:836px;color:#000">-0.15</span>
<svg style="left:1884px;top:841px" width="9" height="9" viewBox="0 0 9 9"><path d="M1 1l7 7M8 1l-7 7" stroke="#8a8a8a" stroke-width="1.900"/></svg>
<svg style="left:19px;top:859px" width="15" height="16" viewBox="0 0 15 16"><path d="M1.500 1.500h6.500l3 3v9.500h-9.500z" fill="#fff" stroke="#777" stroke-width="1"/><path d="M8 1.500v3h3" fill="none" stroke="#777" stroke-width=".8"/><circle cx="10.500" cy="12" r="3.200" fill="#e8401a" stroke="#fff" stroke-width=".5"/></svg>
<span class="td" style="left:38px;top:857px;color:#000">35988492</span>
<span class="td" style="right:1464px;top:857px;color:#000">2020.11.13 18:59:32</span>
<span class="td" style="right:1335px;top:857px;color:#000">sell</span>
<span class="td" style="right:1235px;top:857px;color:#000">0.01</span>
<span class="td" style="right:1106px;top:857px;color:#000">usdjpy</span>
<span class="td" style="right:963px;top:857px;color:#000">104.595</span>
<span class="td" style="right:820px;top:857px;color:#000">0.000</span>
<span class="td" style="right:677px;top:857px;color:#000">0.000</span>
<span class="td" style="right:534px;top:857px;color:#000">104.652</span>
<span class="td" style="right:391px;top:857px;color:#000">0.00</span>
<span class="td" style="right:248px;top:857px;color:#000">-0.03</span>
<span class="td" style="right:46px;top:857px;color:#000">-0.54</span>
<svg style="left:1884px;top:862px" width="9" height="9" viewBox="0 0 9 9"><path d="M1 1l7 7M8 1l-7 7" stroke="#8a8a8a" stroke-width="1.900"/></svg>
<svg style="left:19px;top:880px" width="15" height="16" viewBox="0 0 15 16"><path d="M1.500 1.500h6.500l3 3v9.500h-9.500z" fill="#fff" stroke="#777" stroke-width="1"/><path d="M8 1.500v3h3" fill="none" stroke="#777" stroke-width=".8"/><circle cx="10.500" cy="12" r="3.200" fill="#e8401a" stroke="#fff" stroke-width=".5"/></svg>
<span class="td" style="left:38px;top:878px;color:#000">35988547</span>
<span class="td" style="right:1464px;top:878px;color:#000">2020.11.13 17:56:02</span>
<span class="td" style="right:1335px;top:878px;color:#000">sell</span>
<span class="td" style="right:1235px;top:878px;color:#000">0.01</span>
<span class="td" style="right:1106px;top:878px;color:#000">xauusd</span>
<span class="td" style="right:963px;top:878px;color:#000">1891.28</span>
<span class="td" style="right:820px;top:878px;color:#000">0.00</span>
<span class="td" style="right:677px;top:878px;color:#000">0.00</span>
<span class="td" style="right:534px;top:878px;color:#000">1889.80</span>
<span class="td" style="right:391px;top:878px;color:#000">0.00</span>
<span class="td" style="right:248px;top:878px;color:#000">-0.06</span>
<span class="td" style="right:46px;top:878px;color:#000">1.48</span>
<svg style="left:1884px;top:883px" width="9" height="9" viewBox="0 0 9 9"><path d="M1 1l7 7M8 1l-7 7" stroke="#8a8a8a" stroke-width="1.900"/></svg>
<svg style="left:19px;top:901px" width="15" height="16" viewBox="0 0 15 16"><path d="M1.500 1.500h6.500l3 3v9.500h-9.500z" fill="#fff" stroke="#777" stroke-width="1"/><path d="M8 1.500v3h3" fill="none" stroke="#777" stroke-width=".8"/><circle cx="10.500" cy="12" r="3.200" fill="#1e8fe8" stroke="#fff" stroke-width=".5"/></svg>
<span class="td" style="left:38px;top:899px;color:#000">35991445</span>
<span class="td" style="right:1464px;top:899px;color:#000">2020.11.13 20:29:55</span>
<span class="td" style="right:1335px;top:899px;color:#000">buy</span>
<span class="td" style="right:1235px;top:899px;color:#000">0.01</span>
<span class="td" style="right:1106px;top:899px;color:#000">xauusd</span>
<span class="td" style="right:963px;top:899px;color:#000">1887.67</span>
<span class="td" style="right:820px;top:899px;color:#000">0.00</span>
<span class="td" style="right:677px;top:899px;color:#000">0.00</span>
<span class="td" style="right:534px;top:899px;color:#000">1889.41</span>
<span class="td" style="right:391px;top:899px;color:#000">0.00</span>
<span class="td" style="right:248px;top:899px;color:#000">-0.07</span>
<span class="td" style="right:46px;top:899px;color:#000">1.74</span>
<svg style="left:1884px;top:904px" width="9" height="9" viewBox="0 0 9 9"><path d="M1 1l7 7M8 1l-7 7" stroke="#8a8a8a" stroke-width="1.900"/></svg>
<svg style="left:19px;top:922px" width="15" height="16" viewBox="0 0 15 16"><path d="M1.500 1.500h6.500l3 3v9.500h-9.500z" fill="#fff" stroke="#777" stroke-width="1"/><path d="M8 1.500v3h3" fill="none" stroke="#777" stroke-width=".8"/><circle cx="10.500" cy="12" r="3.200" fill="#1e8fe8" stroke="#fff" stroke-width=".5"/></svg>
<span class="td" style="left:38px;top:920px;color:#fff">35993375</span>
<span class="td" style="right:1464px;top:920px;color:#fff">2020.11.13 23:55:34</span>
<span class="td" style="right:1335px;top:920px;color:#fff">buy</span>
<span class="td" style="right:1235px;top:920px;color:#fff">0.01</span>
<span class="td" style="right:1106px;top:920px;color:#fff">xauusd</span>
<span class="td" style="right:963px;top:920px;color:#fff">1889.95</span>
<span class="td" style="right:820px;top:920px;color:#fff">0.00</span>
<span class="td" style="right:677px;top:920px;color:#fff">0.00</span>
<span class="td" style="right:534px;top:920px;color:#fff">1889.41</span>
<span class="td" style="right:391px;top:920px;color:#fff">0.00</span>
<span class="td" style="right:248px;top:920px;color:#fff">-0.07</span>
<span class="td" style="right:46px;top:920px;color:#fff">-0.54</span>
<svg style="left:1884px;top:925px" width="9" height="9" viewBox="0 0 9 9"><path d="M1 1l7 7M8 1l-7 7" stroke="#b9c4d0" stroke-width="1.900"/></svg>
<svg style="left:19px;top:944px" width="14" height="15" viewBox="0 0 14 15"><rect x=".500" y=".500" width="12" height="13" rx="1.500" fill="#fff" stroke="#888"/><path d="M6.500 11l-3.500-4h2.300v-3h2.400v3h2.300z" fill="#e03a1a"/></svg>
<span class="td" style="left:38px;top:941px;font-weight:bold;letter-spacing:.19px">余额: 3 971.00 USD&nbsp; 净值: 3 954.91&nbsp; 已用预付款: 18.31&nbsp; 可用预付款: 3 936.60&nbsp; 预付款比例: 21602.57%</span>
<span class="td" style="right:46px;top:941px;font-weight:bold;letter-spacing:0">-16.09</span>
<svg style="left:19px;top:964px" width="15" height="16" viewBox="0 0 15 16"><path d="M1.500 1.500h6.500l3 3v9.500h-9.500z" fill="#fff" stroke="#777" stroke-width="1"/><path d="M8 1.500v3h3" fill="none" stroke="#777" stroke-width=".8"/><circle cx="10.500" cy="12" r="3.200" fill="#e8401a" stroke="#fff" stroke-width=".5"/></svg>
<span class="td" style="left:38px;top:962px">35971475</span>
<div style="left:818px;top:962px;width:142px;height:20px;background:#5eed5e"></div>
<span class="td" style="right:1464px;top:962px">2020.11.13 06:42:50</span>
<span class="td" style="right:1335px;top:962px">sell stop</span>
<span class="td" style="right:1235px;top:962px">0.01</span>
<span class="td" style="right:1106px;top:962px">nzdusd</span>
<span class="td" style="right:963px;top:962px">0.68378</span>
<span class="td" style="right:820px;top:962px">0.00000</span>
<span class="td" style="right:677px;top:962px">0.00000</span>
<span class="td" style="right:534px;top:962px">0.68408</span>
<svg style="left:1884px;top:967px" width="9" height="9" viewBox="0 0 9 9"><path d="M1 1l7 7M8 1l-7 7" stroke="#8a8a8a" stroke-width="1.900"/></svg>
<div style="left:16px;top:983px;width:1883px;height:6px;overflow:hidden"><svg style="left:3px;top:3px" width="15" height="16" viewBox="0 0 15 16"><path d="M1.500 1.500h6.500l3 3v9.500h-9.500z" fill="#fff" stroke="#777"/></svg><span class="td" style="left:22px;top:-1px">35993385</span><span class="td" style="right:1443px;top:0">2020.11.13 21:14:00</span><span class="td" style="right:1314px;top:0">sell</span><span class="td" style="right:1214px;top:0">0.01</span><span class="td" style="right:1085px;top:0">usdjpy</span><span class="td" style="right:942px;top:0">104.444</span><span class="td" style="right:799px;top:0">0.000</span><span class="td" style="right:656px;top:0">0.000</span><span class="td" style="right:513px;top:0">104.652</span></div>
<div style="left:1899px;top:811px;width:17px;height:178px;background:#f0f0f0;border-left:1px solid #e3e3e3"></div>
<svg style="left:1903px;top:816px" width="9" height="6" viewBox="0 0 9 6"><path d="M.500 5.500l4-4 4 4" fill="#555"/></svg>
<svg style="left:1903px;top:977px" width="9" height="6" viewBox="0 0 9 6"><path d="M.500 .500l4 4 4-4" fill="#555"/></svg>
<div style="left:1901px;top:940px;width:14px;height:21px;background:linear-gradient(90deg,#f8f8f8,#dedede);border:1px solid #979797;border-radius:2px"><div style="left:3px;top:6px;width:6px;height:1px;background:#666"></div><div style="left:3px;top:9px;width:6px;height:1px;background:#666"></div><div style="left:3px;top:12px;width:6px;height:1px;background:#666"></div></div>
<div style="left:15px;top:989px;width:1902px;height:1px;background:#111"></div>
<div style="left:18px;top:989px;width:44px;height:22px;background:#fff;border:1px solid #000;border-top:none;border-width:0 2px 2px 1px"></div>
<span class="bt2" style="left:27px;color:#000">交易</span>
<span class="bt2" style="left:72px">展示</span>
<span class="bt2" style="left:116px">账户历史</span>
<span class="bt2" style="left:184px">新闻</span>
<span class="bt2" style="left:228px">警报</span>
<span class="bt2" style="left:272px">邮箱</span>
<span class="bt2" style="left:316px">市场</span>
<span class="bt2" style="left:360px">信号</span>
<span class="bt2" style="left:404px">文章</span>
<span class="bt2" style="left:448px">代码库</span>
<span class="bt2" style="left:504px">EA</span>
<span class="bt2" style="left:539px">日志</span>
<i class="bsep" style="left:106px"></i>
<i class="bsep" style="left:174px"></i>
<i class="bsep" style="left:219px"></i>
<i class="bsep" style="left:262px"></i>
<i class="bsep" style="left:306px"></i>
<i class="bsep" style="left:350px"></i>
<i class="bsep" style="left:394px"></i>
<i class="bsep" style="left:438px"></i>
<i class="bsep" style="left:494px"></i>
<i class="bsep" style="left:529px"></i>
<i class="bsep" style="left:573px"></i>
<span style="left:-4px;top:993px;width:22px;height:14px;font-size:11px;line-height:14px;color:#2c3340;transform:rotate(-90deg);transform-origin:50% 50%">终端</span>
<div style="left:0px;top:1016px;width:1920px;height:1px;background:#b8b8b8"></div>
<div style="left:0px;top:1017px;width:1920px;height:1px;background:#fafafa"></div>
<div style="left:0px;top:1018px;width:1920px;height:22px;background:#f0f0f0"></div>
<span class="sb" style="left:2px;letter-spacing:0">寻求帮助,请按F1键</span>
<i class="ssep" style="left:1124px"></i>
<i class="ssep" style="left:1259px"></i>
<i class="ssep" style="left:1376px"></i>
<i class="ssep" style="left:1457px"></i>
<i class="ssep" style="left:1538px"></i>
<i class="ssep" style="left:1616px"></i>
<i class="ssep" style="left:1697px"></i>
<i class="ssep" style="left:1775px"></i>
<span class="sb" style="left:1130px">Default</span>
<span class="sb" style="left:1265px">2020.10.22 11:00</span>
<span class="sb" style="left:1382px">O: 1.31398</span>
<span class="sb" style="left:1464px">H: 1.31412</span>
<span class="sb" style="left:1545px">L: 1.31032</span>
<span class="sb" style="left:1623px">C: 1.31067</span>
<span class="sb" style="left:1703px">V: 10172</span>
<span class="sb" style="left:1808px"><i class="s" style="letter-spacing:.7px">68/1 kb</i></span>
<svg style="left:1781px;top:1023px" width="24" height="13" viewBox="0 0 24 13"><rect x="0.00" y="0" width="1.600" height="11.0" fill="#587800"/><rect x="0.00" y="11.6" width="1.600" height="1.4" fill="#0b3352"/><rect x="2.35" y="0" width="1.600" height="10.1" fill="#587800"/><rect x="2.35" y="10.7" width="1.600" height="2.3" fill="#0b3352"/><rect x="4.70" y="0" width="1.600" height="9.2" fill="#587800"/><rect x="4.70" y="9.8" width="1.600" height="3.2" fill="#0b3352"/><rect x="7.05" y="0" width="1.600" height="8.3" fill="#587800"/><rect x="7.05" y="8.9" width="1.600" height="4.1" fill="#0b3352"/><rect x="9.40" y="0" width="1.600" height="7.4" fill="#587800"/><rect x="9.40" y="8.0" width="1.600" height="5.0" fill="#0b3352"/><rect x="11.75" y="0" width="1.600" height="6.5" fill="#587800"/><rect x="11.75" y="7.1" width="1.600" height="5.9" fill="#0b3352"/><rect x="14.10" y="1" width="1.600" height="4.6" fill="#587800"/><rect x="14.10" y="6.2" width="1.600" height="6.8" fill="#0b3352"/><rect x="16.45" y="1" width="1.600" height="3.7" fill="#587800"/><rect x="16.45" y="5.3" width="1.600" height="7.7" fill="#0b3352"/><rect x="18.80" y="1" width="1.600" height="2.8" fill="#587800"/><rect x="18.80" y="4.4" width="1.600" height="8.6" fill="#0b3352"/><rect x="21.15" y="1" width="1.600" height="1.9" fill="#587800"/><rect x="21.15" y="3.5" width="1.600" height="9.5" fill="#0b3352"/></svg>
<svg style="left:1849px;top:1015px" width="20" height="20" viewBox="0 0 20 20"><rect x="0" y="0" width="20" height="20" rx="3.500" fill="#f7917a" fill-opacity=".93"/><path d="M7 3.500l1.500 3M13 3.500l-1.500 3" stroke="#fff" stroke-width="1.200" stroke-linecap="round"/><circle cx="6.800" cy="3.300" r="1" fill="#fff"/><circle cx="13.200" cy="3.300" r="1" fill="#fff"/><ellipse cx="10" cy="11" rx="6.200" ry="5.300" fill="#fff"/><rect x="2" y="9" width="2.200" height="4.500" rx="1.100" fill="#fff"/><rect x="15.800" y="9" width="2.200" height="4.500" rx="1.100" fill="#fff"/><rect x="6.500" y="9.800" width="7" height="2.600" rx="1.300" fill="#f7917a"/><circle cx="8" cy="11.100" r=".7" fill="#fff"/><circle cx="12" cy="11.100" r=".7" fill="#fff"/></svg>
<span style="left:1874px;top:1017px;font-size:13.500px;line-height:16px;font-weight:bold;color:#f8a893;font-family:'Liberation Serif',serif;transform:scaleX(.86);transform-origin:0 0">EAHub</span>
</body>
</html>
